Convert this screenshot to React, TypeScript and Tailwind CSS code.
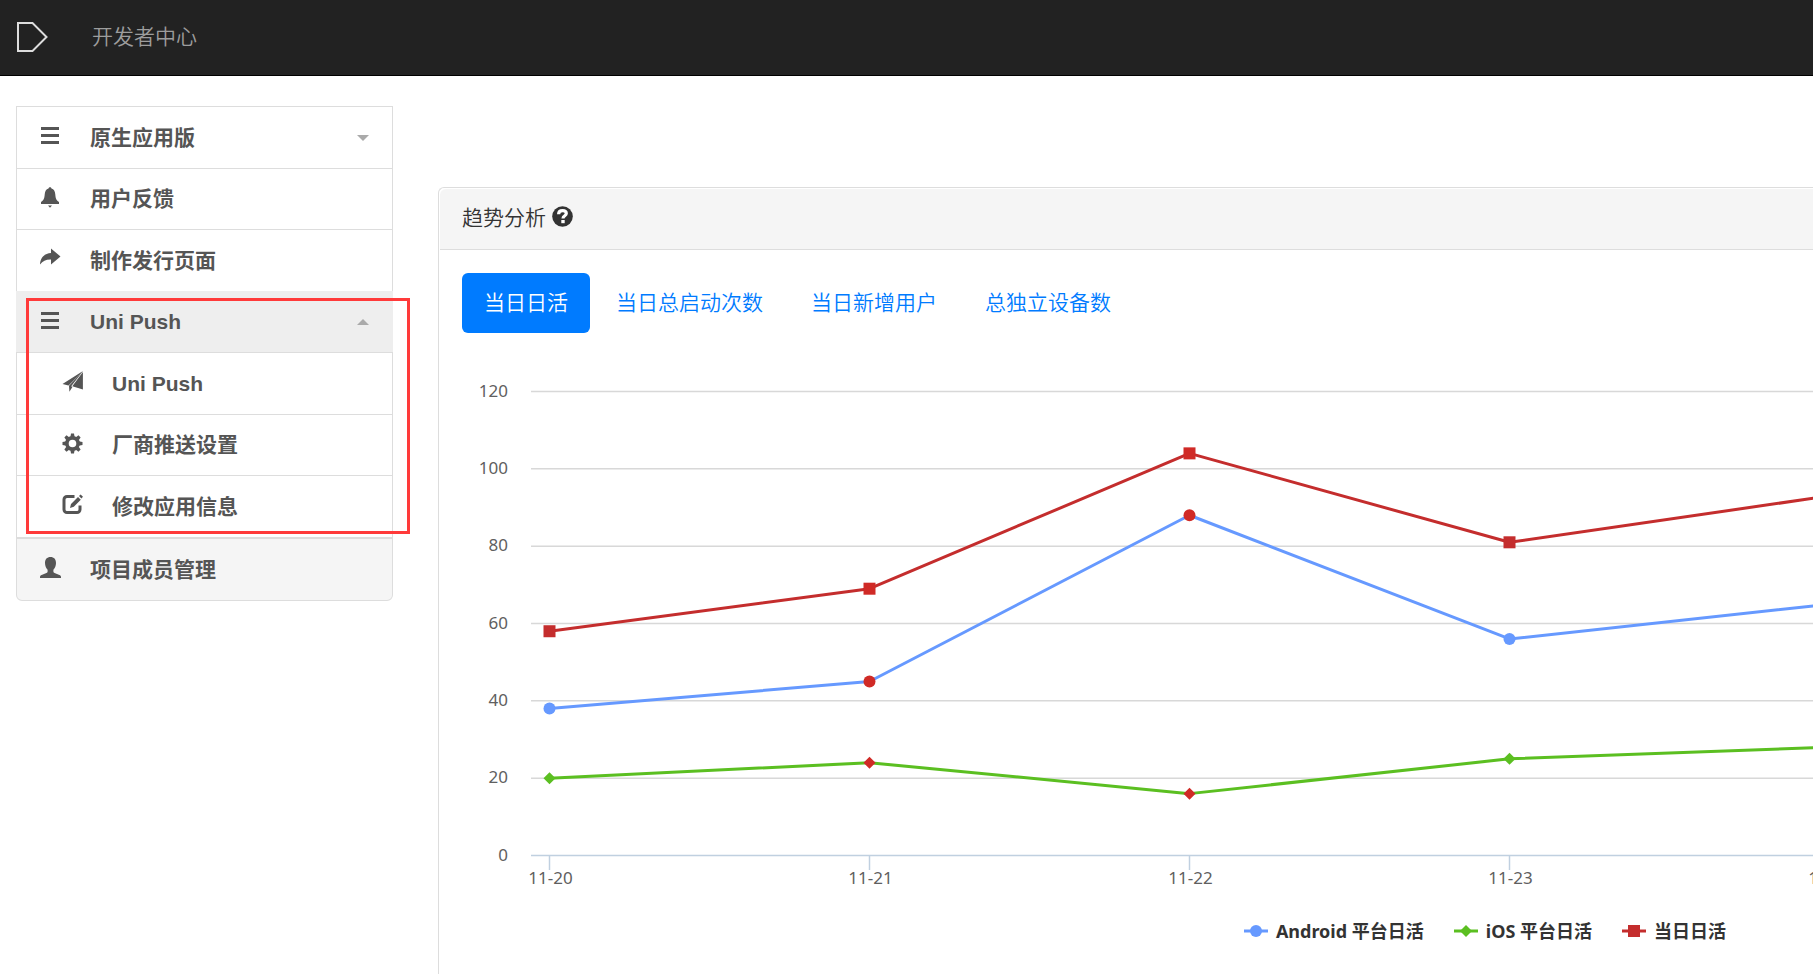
import { useState } from 'react'
import type { ReactNode } from 'react'
import clsx from 'clsx'

type IconName = 'menu' | 'bell' | 'share' | 'send' | 'cog' | 'edit' | 'user' | 'question'

const icons: Record<IconName, ReactNode> = {
  menu: <path d="M1 2h18v3H1zM1 9h18v3H1zM1 16h18v3H1z" />,
  bell: (
    <path d="M10 .3c.8 0 1.3.5 1.5 1.2C14 2 15 4.5 15.3 7.5 15.6 11 16 13 19 15v2H1v-2c3-2 3.4-4 3.7-7.5C5 4.500 6 2 8.500 1.500 8.700.8 9.200.3 10 .3zM8 18.600h4l-2 2.200z" />
  ),
  share: <path d="M11 .5l9.500 8-9.500 8v-5C6 11.300 3 13 0 16.500.3 10 4 5.500 11 5z" />,
  send: <path d="M21 0L.5 13l6 1.500zM21 0L7 14.800l.4 5.900 3-4.700-1.200-.8zM20.900 1L10.300 15.300l10.600 3.200z" />,
  cog: (
    <>
      <circle cx="10.5" cy="10.5" r="5.600" fill="none" stroke="currentColor" strokeWidth="3.600" />
      {[0, 45, 90, 135, 180, 225, 270, 315].map((a) => (
        <path key={a} d="M8.300 4.500L9 .5h3l.7 4z" transform={`rotate(${a} 10.5 10.5)`} />
      ))}
    </>
  ),
  edit: (
    <>
      <path
        d="M12.500 2.500H5a3 3 0 0 0-3 3v10a3 3 0 0 0 3 3h10a3 3 0 0 0 3-3v-4"
        fill="none"
        stroke="currentColor"
        strokeWidth="3"
      />
      <path d="M8 14l1-4 7-7 2.800 2.800-7 7zM17 2l1.600-1.600L21 2.800l-1.600 1.600z" />
    </>
  ),
  user: (
    <path d="M10.500 0C14 0 16 2.300 16 6c0 3-1.200 5.300-2.600 6.800v1.700c0 1 .6 1.300 3.600 2.400 2.800 1 4 1.600 4 3.100v1H0v-1c0-1.500 1.200-2.100 4-3.100 3-1.100 3.600-1.400 3.600-2.400v-1.700C6.200 11.300 5 9 5 6c0-3.700 2-6 5.500-6z" />
  ),
  question: (
    <>
      <circle cx="10.5" cy="10.5" r="10.3" />
      <path d="M6.600 8.300c0-2.600 1.700-3.700 4-3.700s3.700 1.200 3.700 3c0 2.300-3.300 2-3.300 4.800" fill="none" stroke="white" strokeWidth="3.200" />
      <path d="M9.300 14h3.400v3.200H9.300z" fill="white" />
    </>
  ),
}

function Icon({ name }: { name: IconName }) {
  return (
    <svg width="21" height="21" viewBox="0 0 21 21" fill="currentColor" className="shrink-0 overflow-visible" aria-hidden="true">
      {icons[name]}
    </svg>
  )
}

interface MenuRow {
  label: string
  icon: IconName
  caret?: 'up' | 'down'
  sub?: boolean
}

const menuRows: MenuRow[] = [
  { label: '原生应用版', icon: 'menu', caret: 'down' },
  { label: '用户反馈', icon: 'bell' },
  { label: '制作发行页面', icon: 'share' },
  { label: 'Uni Push', icon: 'menu', caret: 'up' },
  { label: 'Uni Push', icon: 'send', sub: true },
  { label: '厂商推送设置', icon: 'cog', sub: true },
  { label: '修改应用信息', icon: 'edit', sub: true },
]

function Caret({ dir }: { dir: 'up' | 'down' }) {
  return (
    <svg width="12" height="10" viewBox="0 -4 12 10" fill="#aaaaaa" className="ml-auto" aria-hidden="true">
      <path d={dir === 'down' ? 'M0 0h12L6 6z' : 'M0 6h12L6 0z'} />
    </svg>
  )
}

function Sidebar() {
  return (
    <nav className="relative w-[377px] shrink-0 text-[21px] leading-[30px] font-bold text-[#555555]">
      <ul>
        {menuRows.map((row, i) => {
          const cls = clsx(
            'flex h-full w-full items-center gap-[29px] border-x border-t pr-[23px] pb-1 text-left',
            row.sub ? 'pl-[45px]' : 'pl-[23px]',
            row.caret === 'up' ? 'border-[#eeeeee] bg-[#eeeeee]' : 'border-[#dddddd] bg-white'
          )
          return (
            <li key={i} className="odd:h-[62px] even:h-[61px]">
              {row.caret ? (
                <button type="button" aria-expanded={row.caret === 'up'} className={cls}>
                  <Icon name={row.icon} />
                  <span className="pt-1">{row.label}</span>
                  <Caret dir={row.caret} />
                </button>
              ) : (
                <a href="#" className={cls}>
                  <Icon name={row.icon} />
                  <span className="pt-1">{row.label}</span>
                </a>
              )}
            </li>
          )
        })}
      </ul>
      <a
        href="#"
        className="flex h-16 items-center gap-[29px] rounded-b-md border border-t-2 border-[#dddddd] bg-[#f5f5f5] pr-[23px] pb-1 pl-[23px]"
      >
        <Icon name="user" />
        <span className="pt-1">项目成员管理</span>
      </a>
      {/* highlight frame around the push section */}
      <div className="pointer-events-none absolute top-[192px] left-[10px] h-[236px] w-[384px] border-3 border-[#ff3a3a]" />
    </nav>
  )
}

type Shape = 'circle' | 'diamond' | 'square'

interface Series {
  name: string
  color: string
  shape: Shape
  values: number[]
  flagged: number[]
}

const series: Series[] = [
  { name: 'Android 平台日活', color: '#6699ff', shape: 'circle', values: [38, 45, 88, 56, 65], flagged: [1, 2] },
  { name: 'iOS 平台日活', color: '#5bbf21', shape: 'diamond', values: [20, 24, 16, 25, 28], flagged: [1, 2] },
  { name: '当日日活', color: '#c42d2d', shape: 'square', values: [58, 69, 104, 81, 93], flagged: [1, 2] },
]

const days = ['11-20', '11-21', '11-22', '11-23', '11-24']
const yTicks = [0, 20, 40, 60, 80, 100, 120]

const px = (i: number) => 87.5 + i * 320
const py = (v: number) => 502.5 - (v * 464) / 120

function Marker({ x, y, shape, color }: { x: number; y: number; shape: Shape; color: string }) {
  if (shape === 'circle') return <circle cx={x} cy={y} r="6" fill={color} />
  if (shape === 'diamond') return <path d={`M${x} ${y - 6}l6 6-6 6-6-6z`} fill={color} />
  return <rect x={x - 6} y={y - 6} width="12" height="12" fill={color} />
}

function TrendChart() {
  return (
    <div className="mt-5 font-['Noto_Sans','Noto_Sans_CJK_SC',sans-serif]">
      <svg className="block h-[540px] w-full" role="img" aria-label="趋势分析">
        {yTicks.map((v) => (
          <g key={v}>
            <line x1="69" x2="100%" y1={py(v)} y2={py(v)} stroke={v ? '#d8d8d8' : '#c0d0e0'} strokeWidth="1.5" />
            <text x="46" y={py(v) + 5} textAnchor="end" fill="#606060" className="text-[17px]">
              {v}
            </text>
          </g>
        ))}
        {days.map((d, i) => (
          <g key={d}>
            <line x1={px(i)} x2={px(i)} y1="503" y2="517" stroke="#c0d0e0" strokeWidth="1.5" />
            <text x={px(i) + 1} y="531" textAnchor="middle" fill="#606060" className="text-[17px]">
              {d}
            </text>
          </g>
        ))}
        {series.map((s) => (
          <g key={s.name}>
            <polyline
              points={s.values.map((v, i) => `${px(i)},${py(v)}`).join(' ')}
              fill="none"
              stroke={s.color}
              strokeWidth="3"
              strokeLinejoin="round"
            />
            {s.values.map((v, i) => (
              <Marker key={i} x={px(i)} y={py(v)} shape={s.shape} color={s.flagged.includes(i) ? '#d02a26' : s.color} />
            ))}
          </g>
        ))}
      </svg>
      <div className="mt-6 flex h-7 justify-end gap-[30px] pr-[87px]">
        {series.map((s) => (
          <button key={s.name} type="button" className="flex items-center gap-2 text-[18px] leading-7 font-bold text-[#333333]">
            <svg width="24" height="12" viewBox="0 0 24 12" aria-hidden="true">
              <path d="M0 6h24" stroke={s.color} strokeWidth="3" />
              <Marker x={12} y={6} shape={s.shape} color={s.color} />
            </svg>
            {s.name}
          </button>
        ))}
      </div>
    </div>
  )
}

const tabs = ['当日日活', '当日总启动次数', '当日新增用户', '总独立设备数']

export default function App() {
  const [active, setActive] = useState(0)

  return (
    <div className="flex h-screen flex-col overflow-hidden bg-white font-['Liberation_Sans','Noto_Sans_CJK_SC',sans-serif] text-[21px] leading-[30px] text-[#333333]">
      <header className="flex h-[76px] shrink-0 items-center gap-11 border-b border-black bg-[#222222] px-4 pb-[2px]">
        <a href="#" aria-label="首页">
          <svg width="32" height="32" viewBox="0 0 32 32" fill="none" stroke="#dddddd" strokeWidth="2">
            <path d="M2 2h14.500l14 14-14 14H2z" />
          </svg>
        </a>
        <a href="#" className="font-[350] text-[#9d9d9d]">
          开发者中心
        </a>
      </header>
      <div className="flex min-h-0 flex-1 items-start pt-[30px] pl-4">
        <Sidebar />
        <main className="mt-[81px] ml-[45px] min-w-0 flex-1 self-stretch rounded-tl-md border-t border-l border-[#dddddd]">
          <h2 className="mt-px ml-px flex h-[61px] items-center gap-[6px] rounded-tl-md border-b border-[#dddddd] bg-[#f5f5f5] pb-[6px] pl-[22px] font-[350]">
            <span className="pt-1">趋势分析</span>
            <Icon name="question" />
          </h2>
          <div className="pt-[23px] pl-[23px]">
            <div role="tablist" className="flex gap-1 font-[350]">
              {tabs.map((t, i) => (
                <button
                  key={t}
                  type="button"
                  role="tab"
                  aria-selected={i === active}
                  onClick={() => setActive(i)}
                  className={clsx(
                    'rounded-md px-[22px] py-[15px]',
                    i === active ? 'bg-[#007bff] text-white' : 'text-[#007bff]'
                  )}
                >
                  {t}
                </button>
              ))}
            </div>
            <TrendChart />
          </div>
        </main>
      </div>
    </div>
  )
}
